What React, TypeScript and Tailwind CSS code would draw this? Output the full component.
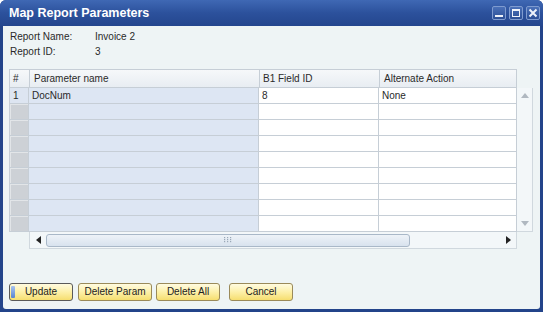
import React from 'react';

const rows = [
  { n: '1', name: 'DocNum', field: '8', action: 'None' },
  ...Array.from({ length: 8 }, () => ({ n: '', name: '', field: '', action: '' })),
];

function WinButton({ kind }: { kind: 'min' | 'max' | 'close' }) {
  return (
    <div className="w-[14px] h-[14px] rounded-[2px] border border-[#7f9bcf] bg-gradient-to-b from-[#4a70b8] to-[#2c4f96] flex items-center justify-center">
      <svg width="10" height="10" viewBox="0 0 10 10">
        {kind === 'min' && <rect x="1" y="7" width="8" height="2" fill="#eef2fa" />}
        {kind === 'max' && (
          <>
            <rect x="1.5" y="1.5" width="7" height="7" fill="none" stroke="#eef2fa" strokeWidth="1" />
            <rect x="1" y="1" width="8" height="2" fill="#eef2fa" />
          </>
        )}
        {kind === 'close' && (
          <path d="M1.5 1.5 L8.5 8.5 M8.5 1.5 L1.5 8.5" stroke="#eef2fa" strokeWidth="2" />
        )}
      </svg>
    </div>
  );
}

function SapButton({ label, width, primary }: { label: string; width: string; primary?: boolean }) {
  return (
    <button
      className={`${width} h-[18px] relative rounded-[3px] border ${
        primary ? 'border-[#5a5a5a] border-[1.5px]' : 'border-[#9a8a5a]'
      } bg-gradient-to-b from-[#fffbe0] via-[#fdf0a8] to-[#f6de6e] text-[10px] text-[#222] leading-none flex items-center justify-center`}
    >
      {primary && <span className="absolute left-[1px] top-[2px] bottom-[2px] w-[4px] rounded-[1px] bg-gradient-to-b from-[#a8c4f0] to-[#5a84d0]" />}
      {label}
    </button>
  );
}

export default function App() {
  return (
    <div
      className="w-[543px] h-[312px] flex flex-col bg-[#23448a] rounded-t-[6px] overflow-hidden"
      style={{ fontFamily: '"Liberation Sans", Arial, sans-serif' }}
    >
      {/* title bar */}
      <div className="h-[26px] flex items-center justify-between pl-[9px] pr-[3px] bg-gradient-to-b from-[#3f68b4] via-[#2c519c] to-[#24468e]">
        <span className="text-white font-bold text-[12.5px]">Map Report Parameters</span>
        <div className="flex gap-[3px] pb-[1px]">
          <WinButton kind="min" />
          <WinButton kind="max" />
          <WinButton kind="close" />
        </div>
      </div>

      {/* body */}
      <div className="flex-1 mx-[3px] mb-[3px] bg-[#eef4f5] rounded-b-[3px] flex flex-col text-[10px] text-[#2a2a2a]">
        <div className="pl-[7px] pt-[3px] flex flex-col">
          <div className="flex h-[15px] items-center">
            <span className="w-[85px]">Report Name:</span>
            <span>Invoice 2</span>
          </div>
          <div className="flex h-[15px] items-center">
            <span className="w-[85px]">Report ID:</span>
            <span>3</span>
          </div>
        </div>

        {/* grid */}
        <div className="ml-[6px] mt-[10px] w-[524px]">
          <div className="flex h-[19px]">
            <div className="w-[508px] flex border border-[#c6ced6] bg-gradient-to-b from-[#f6f8fa] to-[#e8edf2]">
              <div className="w-[20px] pl-[3px] flex items-center border-r border-[#c6ced6]">#</div>
              <div className="w-[230px] pl-[4px] flex items-center border-r border-[#c6ced6]">Parameter name</div>
              <div className="w-[120px] pl-[3px] flex items-center border-r border-[#c6ced6]">B1 Field ID</div>
              <div className="flex-1 pl-[4px] flex items-center">Alternate Action</div>
            </div>
          </div>
          <div className="flex">
            <div className="w-[508px] flex flex-col border-l border-[#c6ced6]">
              {rows.map((r, i) => (
                <div key={i} className="flex h-[16px] border-b border-[#c6ced6]">
                  <div
                    className={`w-[19px] pl-[3px] flex items-center border-r border-[#c6ced6] ${
                      r.n ? 'bg-[#dde5f1]' : 'bg-[#cdd1d6] shadow-[inset_1px_1px_0_#e2e5e8]'
                    }`}
                  >
                    {r.n}
                  </div>
                  <div className="w-[230px] pl-[3px] flex items-center border-r border-[#c6ced6] bg-[#dde6f3]">{r.name}</div>
                  <div className="w-[120px] pl-[3px] flex items-center border-r border-[#c6ced6] bg-white">{r.field}</div>
                  <div className="flex-1 pl-[3px] flex items-center border-r border-[#c6ced6] bg-white">{r.action}</div>
                </div>
              ))}
            </div>
            {/* vertical scrollbar */}
            <div className="w-[16px] h-[144px] flex flex-col justify-between items-center bg-[#f3f7f9] border-r border-b border-[#d0d8de] py-[5px]">
              <svg width="8" height="5" viewBox="0 0 8 5">
                <path d="M0 5 L4 0 L8 5 Z" fill="#b0b8c0" />
              </svg>
              <svg width="8" height="5" viewBox="0 0 8 5">
                <path d="M0 0 L4 5 L8 0 Z" fill="#b0b8c0" />
              </svg>
            </div>
          </div>
          {/* horizontal scrollbar */}
          <div className="flex">
            <div className="w-[20px]" />
            <div className="w-[488px] h-[17px] flex items-center bg-[#f3f7f9] border border-t-0 border-[#d0d8de]">
              <div className="w-[16px] flex justify-center">
                <svg width="5" height="8" viewBox="0 0 5 8">
                  <path d="M5 0 L0 4 L5 8 Z" fill="#222" />
                </svg>
              </div>
              <div className="w-[364px] h-[13px] rounded-[3px] border border-[#a9b8c8] bg-gradient-to-b from-[#eef3f8] to-[#d8e2ee] flex items-center justify-center">
                <svg width="8" height="6" viewBox="0 0 8 6">
                  {[0, 3, 6].map((x) =>
                    [0, 2, 4].map((y) => <rect key={`${x}-${y}`} x={x} y={y} width="1.2" height="1.2" fill="#9aa8b8" />)
                  )}
                </svg>
              </div>
              <div className="flex-1" />
              <div className="w-[16px] flex justify-center">
                <svg width="5" height="8" viewBox="0 0 5 8">
                  <path d="M0 0 L5 4 L0 8 Z" fill="#222" />
                </svg>
              </div>
            </div>
          </div>
        </div>

        {/* buttons */}
        <div className="flex ml-[6px] mt-[34px]">
          <SapButton label="Update" width="w-[64px]" primary />
          <div className="w-[5px]" />
          <SapButton label="Delete Param" width="w-[74px]" />
          <div className="w-[4px]" />
          <SapButton label="Delete All" width="w-[64px]" />
          <div className="w-[9px]" />
          <SapButton label="Cancel" width="w-[64px]" />
        </div>
      </div>
    </div>
  );
}
